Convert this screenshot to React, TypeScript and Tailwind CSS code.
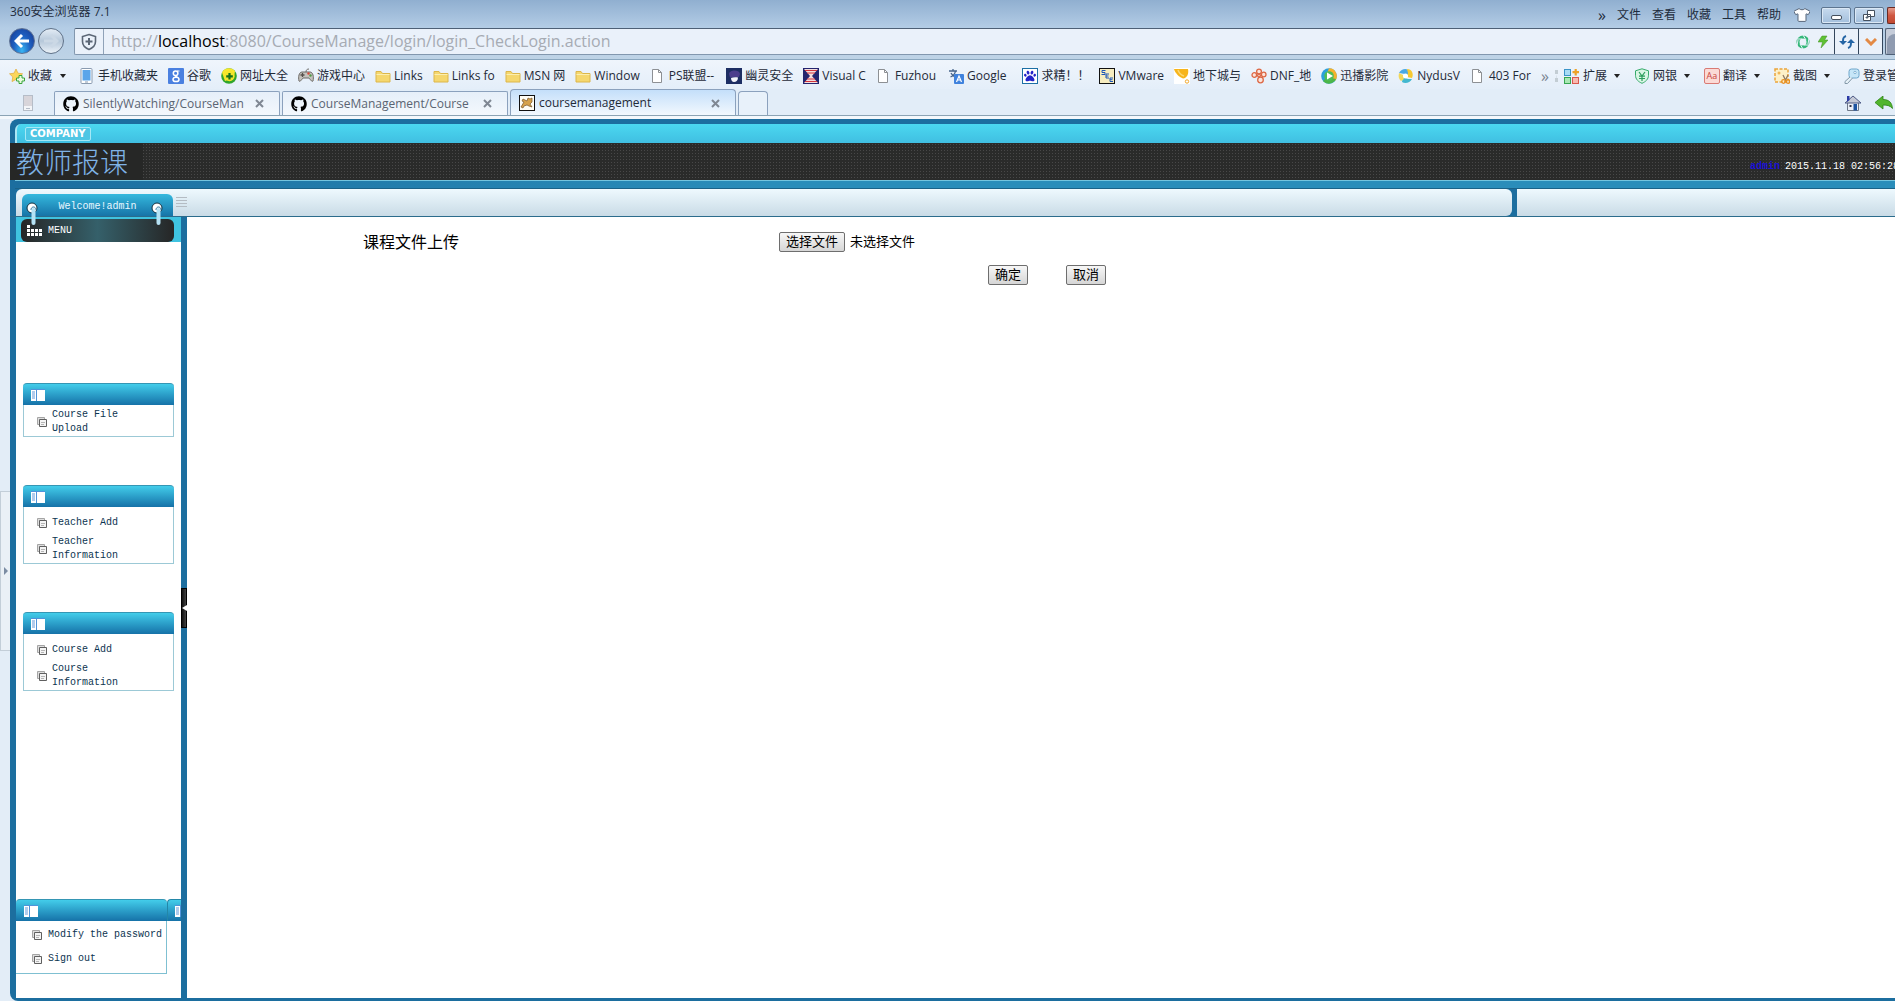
import { useState } from 'react';
import type { ReactNode } from 'react';
import { FaGithub, FaPaw, FaTshirt } from 'react-icons/fa';

interface Bookmark {
  label: string;
  icon: ReactNode;
  className?: string;
}

interface NavGroup {
  id: string;
  items: string[];
}

const Icon = ({ children }: { children: ReactNode }) => (
  <svg viewBox="0 0 16 16" className="h-4 w-4 shrink-0" aria-hidden="true">
    {children}
  </svg>
);

const FolderIcon = () => (
  <Icon>
    <path d="M1 3.5h5l1.5 2H15V14H1z" fill="#f5d76e" stroke="#dcb64a" strokeWidth="1" />
    <path d="M1.5 6.5h13" stroke="#fbeeb0" strokeWidth="1" />
  </Icon>
);

const PageIcon = () => (
  <Icon>
    <path d="M2.5 1.500h6l3 3v10h-9z" fill="#fff" stroke="#8d9094" />
    <path d="M8.5 1.5v3h3" fill="none" stroke="#8d9094" />
  </Icon>
);

const StarIcon = () => (
  <Icon>
    <path d="M7 1l2 4.2 4.6.6-3.4 3.2.8 4.6L7 11.4l-4 2.2.8-4.6L.5 5.8 5 5.2z" fill="#fbd65a" stroke="#e0a93a" strokeWidth=".7" />
    <path d="M10 7.5h3V10h2.5v3H13v2.5h-3V13H7.5v-3H10z" fill="#eafbe0" stroke="#3aa53a" />
  </Icon>
);

const PhoneIcon = () => (
  <Icon>
    <rect x="2" y=".5" width="11" height="15" rx="1" fill="#fff" stroke="#8a9bb0" />
    <rect x="3.5" y="2" width="8" height="10.5" fill="#5aa5ea" />
    <path d="M6 14h3" stroke="#8a9bb0" />
  </Icon>
);

const bookmarks: Bookmark[] = [
  { label: '手机收藏夹', icon: <PhoneIcon /> },
  {
    label: '谷歌',
    icon: (
      <Icon>
        <rect width="16" height="16" rx="1" fill="#4a80e0" />
        <circle cx="7.6" cy="5.2" r="2.3" fill="none" stroke="#fff" strokeWidth="1.5" />
        <ellipse cx="8" cy="11.4" rx="3" ry="2.2" fill="none" stroke="#fff" strokeWidth="1.5" />
        <path d="M8 7.5c-2 1 1 1 1.5 2M9 3h2.5" fill="none" stroke="#fff" strokeWidth="1.2" />
      </Icon>
    ),
  },
  {
    label: '网址大全',
    icon: (
      <Icon>
        <circle cx="8" cy="8" r="7.8" fill="#2fa52c" />
        <path d="M1 4.5a7.8 7.8 0 0 1 13-1.5L13 10 4 13z" fill="#f7e72c" />
        <circle cx="8.5" cy="8.3" r="5" fill="#f3e62a" />
        <path d="M8.5 5v6.6M5.2 8.3h6.6" stroke="#15701c" strokeWidth="2.2" />
      </Icon>
    ),
  },
  {
    label: '游戏中心',
    icon: (
      <Icon>
        <path d="M1 13C0 9 1 4 4 4h8c3 0 4 5 3 9-1 1.500-3-2-4-3H5c-1 1-3 4.500-4 3z" fill="#c4c2bd" stroke="#6d6a66" />
        <path d="M4.500 5v4M2.500 7h4" stroke="#554f4a" strokeWidth="1.300" />
        <circle cx="10.500" cy="5.500" r="1.200" fill="#d6483a" />
        <circle cx="12.500" cy="7.500" r="1.200" fill="#4f9b47" />
        <path d="M8 4c0-2 1-3 3-3" fill="none" stroke="#6d6a66" />
      </Icon>
    ),
  },
  { label: 'Links', icon: <FolderIcon /> },
  { label: 'Links fo', icon: <FolderIcon /> },
  { label: 'MSN 网', icon: <FolderIcon /> },
  { label: 'Window', icon: <FolderIcon /> },
  { label: 'PS联盟--', icon: <PageIcon />, className: 'pr-[2px]' },
  {
    label: '幽灵安全',
    icon: (
      <Icon>
        <rect width="16" height="16" fill="#1d2e63" />
        <path d="M3 6c0-4 10-5 11 0l-1 3-9 .5z" fill="#4b3d8c" />
        <path d="M5 10c2-1 5-1 7-.5 0 3-2 4.500-4 4.500s-3-2-3-4z" fill="#f2f3fa" />
      </Icon>
    ),
  },
  {
    label: 'Visual C',
    icon: (
      <Icon>
        <rect width="16" height="16" fill="#24246e" />
        <path d="M1 1h14L9 8l6 7H1l6-7z" fill="#f4dede" />
        <path d="M2 2.500h12M4 5h8M4 11h8M2 13.500h12" stroke="#d2343c" strokeWidth="1.200" />
      </Icon>
    ),
  },
  { label: 'Fuzhou', icon: <PageIcon />, className: 'pr-[2px]' },
  {
    label: 'Google',
    className: 'pr-[6px]',
    icon: (
      <Icon>
        <path d="M1 3h8M5 1v2M2.500 9C5 8 7 6 7.500 3M3 5c1 2 2 3 4 4" fill="none" stroke="#46648a" strokeWidth="1.300" />
        <rect x="6" y="6" width="10" height="10" rx="1" fill="#3f82dd" />
        <path d="M8.500 14L11 8l2.500 6M9.500 12h3" fill="none" stroke="#fff" strokeWidth="1.200" />
      </Icon>
    ),
  },
  {
    label: '求精！！',
    icon: (
      <span className="flex h-4 w-4 shrink-0 items-center justify-center border border-[#1c6fa5] bg-white">
        <FaPaw className="h-3 w-3 text-[#2323c8]" />
      </span>
    ),
  },
  {
    label: 'VMware',
    icon: (
      <Icon>
        <rect x=".5" y=".5" width="15" height="15" fill="#f7edc0" stroke="#111" />
        <path d="M6.500 2.500H3v2h3v2H2.500M10 6H7v4h3M7 8h2.500M14 10h-3v3.500h3M11 11.700h2.500" fill="none" stroke="#1c55b8" strokeWidth="1" />
      </Icon>
    ),
  },
  {
    label: '地下城与',
    icon: (
      <Icon>
        <rect width="16" height="16" fill="#fff" />
        <path d="M0 1h14c1 5-1 9-5 9.500C5 9 1 5 0 1z" fill="#f7b51c" />
        <path d="M4 2c1 3 3 5 6 6" fill="none" stroke="#fbd873" strokeWidth="1.500" />
        <circle cx="13" cy="13.500" r="1.700" fill="none" stroke="#f0a72a" />
      </Icon>
    ),
  },
  {
    label: 'DNF_地',
    icon: (
      <Icon>
        <g fill="#fbe5dc" stroke="#dd6744" strokeWidth="1.300">
          <circle cx="8" cy="3.500" r="2.400" />
          <circle cx="3.300" cy="7" r="2.300" />
          <circle cx="12.700" cy="6.500" r="2.300" />
          <circle cx="9.500" cy="12" r="2.800" />
          <circle cx="8" cy="7.500" r="1.400" />
        </g>
      </Icon>
    ),
  },
  {
    label: '迅播影院',
    icon: (
      <Icon>
        <circle cx="8" cy="8" r="7.800" fill="#2ba0dc" />
        <path d="M8 .2A7.800 7.800 0 0 1 14 13L5 8z" fill="#f5b22b" />
        <path d="M2 13a7.800 7.800 0 0 0 13-2L6 9z" fill="#4cb648" />
        <circle cx="8" cy="8" r="4.800" fill="#4ebd5a" />
        <path d="M6 4.500L12 8l-6 3.500z" fill="#fff" />
      </Icon>
    ),
  },
  {
    label: 'NydusV',
    icon: (
      <Icon>
        <path d="M1 5c2-4 7-5 9-3l2 6-5-2z" fill="#49a9e4" />
        <path d="M9 1c5 0 7 5 5 9l-5-1 1-4z" fill="#f6c931" />
        <path d="M14 11c-2 4-7 5-10 3l1-5 5 2z" fill="#43b8cf" />
        <path d="M1 5c-1 4 0 6 2 8l3-2-1-4z" fill="#f2d75a" />
        <circle cx="7.500" cy="8" r="2.500" fill="#fff" />
      </Icon>
    ),
  },
  { label: '403 For', icon: <PageIcon /> },
];

const extensions: Bookmark[] = [
  {
    label: '扩展',
    icon: (
      <Icon>
        <rect x=".5" y="1.500" width="6" height="6" fill="#a8dcf5" stroke="#3a94c8" />
        <rect x=".5" y="9.500" width="6" height="6" fill="#a9e8b4" stroke="#36a651" />
        <rect x="8.500" y="9.500" width="6" height="6" fill="#f9b9b0" stroke="#d85a4e" />
        <path d="M11.700 1v6.500M8.500 4.200H15" stroke="#eda227" strokeWidth="2.200" />
      </Icon>
    ),
  },
  {
    label: '网银',
    icon: (
      <Icon>
        <path d="M8 .8l6.500 2v4.500c0 4-3 6.500-6.500 8-3.500-1.500-6.500-4-6.500-8V2.800z" fill="#d9f5e4" stroke="#37ab6b" />
        <path d="M5 4l3 4 3-4M5 8.200h6M5 10.500h6M8 8v5" fill="none" stroke="#2b9d5c" strokeWidth="1.200" />
      </Icon>
    ),
  },
  {
    label: '翻译',
    icon: (
      <span className="flex h-4 w-4 shrink-0 items-center justify-center rounded-xs border border-[#d97a74] bg-[#fbdad6] text-[9px] text-[#c9453d]">
        Aa
      </span>
    ),
  },
  {
    label: '截图',
    icon: (
      <Icon>
        <rect x="1" y="1" width="13" height="13" fill="#fdf0c8" stroke="#eaa43a" strokeWidth="1.500" strokeDasharray="3 1.500" />
        <circle cx="5" cy="5" r="1.500" fill="#efb75a" />
        <path d="M9 7l2.500 5L14 7" fill="none" stroke="#8f7a66" strokeWidth="1.300" />
        <circle cx="9.500" cy="13.500" r="1.800" fill="none" stroke="#e98f1f" strokeWidth="1.300" />
        <circle cx="14" cy="13.500" r="1.800" fill="none" stroke="#e98f1f" strokeWidth="1.300" />
      </Icon>
    ),
  },
];

const groups: NavGroup[] = [
  { id: 'upload', items: ['Course File Upload'] },
  { id: 'teacher', items: ['Teacher Add', 'Teacher Information'] },
  { id: 'course', items: ['Course Add', 'Course Information'] },
];

const Arrow = () => (
  <span className="h-0 w-0 border-x-[3px] border-t-4 border-x-transparent border-t-[#222]" />
);

const TitleBar = () => (
  <div className="flex h-7 shrink-0 items-start justify-between bg-linear-to-b from-[#90afd0] to-[#b4cde6] pl-[10px] text-xs text-[#1e2c3c]">
    <span className="leading-6">360安全浏览器 7.1</span>
    <div className="flex shrink-0 items-center gap-[11px] pt-[3px]">
      <button className="text-base leading-6">»</button>
      {['文件', '查看', '收藏', '工具', '帮助'].map((item) => (
        <button key={item} className="leading-6">
          {item}
        </button>
      ))}
      <FaTshirt className="ml-[2px] h-4 w-4 fill-white stroke-[#566579] stroke-[40px]" />
      <div className="flex items-center gap-[3px]">
        <button
          aria-label="Minimize"
          className="flex h-[17px] w-[30px] items-center justify-center rounded-xs border border-[#5d7590] bg-linear-to-b from-[#c7daee] to-[#a3bfdc] shadow-[inset_0_0_0_1px_#dbe8f5]"
        >
          <span className="mt-1 h-[5px] w-[11px] rounded-xs border border-[#45505e] bg-white" />
        </button>
        <button
          aria-label="Restore"
          className="flex h-[17px] w-[30px] items-center justify-center rounded-xs border border-[#5d7590] bg-linear-to-b from-[#c7daee] to-[#a3bfdc] shadow-[inset_0_0_0_1px_#dbe8f5]"
        >
          <svg viewBox="0 0 12 11" className="h-[11px] w-3">
            <path d="M4.500.5h7v6h-7z M.5 4.500h7v6h-7z" fill="#fff" stroke="#45505e" />
            <path d="M3 7h2v1H3z" fill="#8aa6c4" stroke="#45505e" strokeWidth=".8" />
          </svg>
        </button>
        <button
          aria-label="Close"
          className="h-[17px] w-2 rounded-l-xs border border-r-0 border-[#6b2a22] bg-linear-to-b from-[#e39b8c] via-[#cf5741] to-[#c14a32]"
        />
      </div>
    </div>
  </div>
);

const AddressBar = () => (
  <div className="flex h-8 shrink-0 items-start border-b border-[#8aa7bf] bg-linear-to-b from-[#b4cde6] to-[#bed3e6] pl-[9px]">
    <div className="flex items-center gap-[3px] rounded-full">
      <button
        aria-label="Back"
        className="flex h-[26px] w-[26px] items-center justify-center rounded-full border border-[#5b6f93] bg-radial-[at_50%_90%] from-[#39b4f2] via-[#1d5fc0] to-[#17358c]"
      >
        <svg viewBox="0 0 16 16" className="h-4 w-4">
          <path d="M8 2L2 8l6 6M2.500 8H15" fill="none" stroke="#fff" strokeWidth="3" />
        </svg>
      </button>
      <button
        aria-label="Forward"
        className="flex h-[26px] w-[26px] items-center justify-center rounded-full border border-[#5f7188] bg-linear-to-b from-[#e3ecf5] via-[#b6c8da] to-[#eaf1f8]"
      >
        <svg viewBox="0 0 16 16" className="h-4 w-4">
          <path d="M8 2l6 6-6 6M13.500 8H1" fill="none" stroke="#cbd8e5" strokeWidth="3" />
        </svg>
      </button>
    </div>
    <div className="ml-[10px] flex h-[27px] min-w-0 grow items-stretch rounded-l-xs border border-r-0 border-[#8297ae] border-t-[#4e6076] bg-[#eaf1fa]">
      <span className="flex w-[29px] shrink-0 items-center justify-center border-r border-[#8fa2b8]">
        <svg viewBox="0 0 18 18" className="h-[18px] w-[18px]">
          <path d="M9 1.500l6.500 2v5c0 4-3 6.500-6.500 8-3.500-1.500-6.500-4-6.500-8v-5z" fill="none" stroke="#5b6776" strokeWidth="1.600" />
          <path d="M9 5v7M5.500 8.500h7" stroke="#5b6776" strokeWidth="2" />
        </svg>
      </span>
      <div className="grow pl-[7px] font-['Open_Sans','Noto_Sans_CJK_SC',sans-serif] text-base leading-[25px] text-[#a6abb3]">
        http://<span className="text-black">localhost</span>:8080/CourseManage/login/login_CheckLogin.action
      </div>
      <div className="flex items-center gap-2 pr-[6px]">
        <svg viewBox="0 0 14 14" className="h-[14px] w-[14px]">
          <circle cx="7" cy="7" r="5" fill="none" stroke="#35b879" strokeWidth="3" />
          <path d="M7 0l3 5M13 3l-1 6M13 10H8M7 14l-3-5M1 11l1-6M1 4h5" stroke="#eaf1fa" />
        </svg>
        <svg viewBox="0 0 10 14" className="h-[14px] w-[10px]">
          <path d="M4 1h5L6.500 5H10L3 13l1.500-6H0z" fill="#5fc234" stroke="#438f25" strokeWidth=".5" />
        </svg>
      </div>
      <button aria-label="Reload" className="flex w-6 items-center justify-center border-l border-[#33465c]">
        <svg viewBox="0 0 16 14" className="h-[14px] w-4">
          <path d="M7 1C4 2 4 4 4 7M9 13c3-1 3-3 3-6" fill="none" stroke="#2465a5" strokeWidth="2" />
          <path d="M0 6h8l-4 4zM8 8h8l-4-4z" fill="#2465a5" />
        </svg>
      </button>
      <button aria-label="History" className="flex w-[25px] items-center justify-center border-x border-[#33465c]">
        <svg viewBox="0 0 12 8" className="h-2 w-3">
          <path d="M1 1l5 5 5-5" fill="none" stroke="#e38a45" strokeWidth="3" />
        </svg>
      </button>
    </div>
    <div className="ml-[2px] flex h-[27px] w-[10px] shrink-0 items-end overflow-hidden rounded-l-xs border border-r-0 border-[#4e6076] bg-[#c5ccd9]">
      <span className="ml-px h-5 w-4 shrink-0 rounded-t-full bg-[#8f9bb0]" />
    </div>
  </div>
);

const BookmarkBar = () => (
  <div className="flex h-[29px] shrink-0 items-center justify-between overflow-hidden bg-linear-to-b from-[#eff5fc] to-[#e4eef9] pt-[2px] pl-[9px] text-xs whitespace-nowrap text-[#1f2a38]">
    <div className="flex shrink-0 items-center gap-[10px]">
      <button className="mr-[3px] flex items-center gap-[3px]">
        <StarIcon />
        <span className="mr-[5px]">收藏</span>
        <Arrow />
      </button>
      {bookmarks.map((bookmark) => (
        <a key={bookmark.label} href="#" className={`flex items-center gap-[3px] ${bookmark.className ?? ''}`}>
          {bookmark.icon}
          {bookmark.label}
        </a>
      ))}
    </div>
    <div className="flex shrink-0 items-center">
      <button className="mr-[6px] text-base leading-4 text-[#7a8490]">»</button>
      <span className="mr-[6px] h-3 border-l-[3px] border-dotted border-[#c3cdd4]" />
      {extensions.map((extension) => (
        <button key={extension.label} className="mr-[14px] flex items-center gap-[3px]">
          {extension.icon}
          <span className="mr-1">{extension.label}</span>
          <Arrow />
        </button>
      ))}
      <button className="-mr-1 flex items-center gap-[3px]">
        <Icon>
          <rect x="5" y="1" width="10" height="9" rx="2.500" fill="#c6e6f8" stroke="#6ea6cb" />
          <circle cx="11" cy="4.500" r="1.200" fill="#fff" stroke="#6ea6cb" strokeWidth=".8" />
          <path d="M6 9l-5 4.500v2h2.500l5-5.500" fill="#e6f1f8" stroke="#8398a8" />
        </Icon>
        登录管
      </button>
    </div>
  </div>
);

const TomcatIcon = () => (
  <Icon>
    <rect x=".5" y=".5" width="15" height="15" fill="#fffdf5" stroke="#111" />
    <path d="M2 12l3-5-2-1 1-2 4 2 1-3 2 1 2-1v4l-2 2 2 3-3-1-2-1-3 1-1 2z" fill="#d6a24c" stroke="#77552a" strokeWidth=".7" />
  </Icon>
);

const CloseMark = () => (
  <svg viewBox="0 0 9 9" className="h-[9px] w-[9px]">
    <path d="M1 1l7 7M8 1L1 8" stroke="#7f8793" strokeWidth="2" />
  </svg>
);

const TabBar = () => (
  <div className="flex h-[27px] shrink-0 items-end justify-between border-b border-[#8ba3b4] bg-[#e2edf8] pr-[2px] text-xs">
    <div className="flex items-end gap-[2px]">
      <span className="mr-[19px] mb-1 ml-[23px] flex h-4 w-[10px] flex-col items-center justify-between border border-[#b5bdc8] bg-[#f3f5f8] pb-px">
        <span className="h-[10px] w-full bg-[#d8d5da]" />
        <span className="h-px w-1 bg-[#b5bdc8]" />
      </span>
      {['SilentlyWatching/CourseMan', 'CourseManagement/Course'].map((tab) => (
        <div
          key={tab}
          className="flex h-6 w-[226px] items-center rounded-t-xs border border-b-0 border-[#8ba1bd] bg-linear-to-b from-[#e6eff9] to-[#f3f8fd] pl-2 text-[#5a6472]"
        >
          <FaGithub className="h-4 w-4 shrink-0 text-black" />
          <span className="ml-1 w-[172px] whitespace-nowrap">{tab}</span>
          <button aria-label="Close tab">
            <CloseMark />
          </button>
        </div>
      ))}
      <div className="flex h-[26px] w-[226px] items-center rounded-t-sm border border-b-0 border-[#8ba1bd] bg-linear-to-b from-[#c4dffa] to-[#f2f8fe] pt-px pl-2 text-[#1f2a38]">
        <TomcatIcon />
        <span className="ml-1 w-[172px]">coursemanagement</span>
        <button aria-label="Close tab">
          <CloseMark />
        </button>
      </div>
      <button aria-label="New tab" className="h-6 w-[30px] rounded-t-sm border border-b-0 border-[#8ba1bd] bg-[#e8f1fa]" />
    </div>
    <div className="mb-1 flex items-center gap-[14px]">
      <svg viewBox="0 0 16 16" className="h-4 w-4">
        <path d="M2.500 7h11v8.500h-11z" fill="#e9eef7" stroke="#6d7888" />
        <path d="M0 8l8-7 8 7z" fill="#c4c9d6" stroke="#4d5a85" />
        <path d="M2 1h2.500v4L2 7z" fill="#2b3aa5" />
        <rect x="8.500" y="9" width="3.500" height="6.500" fill="#1c53a0" />
        <rect x="4.500" y="10" width="2" height="2" fill="#334" />
      </svg>
      <svg viewBox="0 0 18 14" className="h-[14px] w-[18px]">
        <path d="M0 6.500L8 0v3.500c6 0 9 3 9.500 9C15 9.500 12 9 8 9v4z" fill="#51b52c" stroke="#2d8317" strokeWidth=".8" />
      </svg>
    </div>
  </div>
);

const PanelIcon = () => (
  <svg viewBox="0 0 14 12" className="h-3 w-[14px] shrink-0">
    <rect width="14" height="12" fill="#fff" />
    <path d="M0 .5h14M5.500 0v12" stroke="#4f93da" />
    <path d="M1 3h3M1 5h3M1 7h3M1 9h3" stroke="#3a7fd0" strokeWidth=".8" />
  </svg>
);

const ItemIcon = () => (
  <svg viewBox="0 0 10 10" className="h-[10px] w-[10px] shrink-0">
    <path d="M.5.5h7v7h-7z" fill="#dedede" stroke="#a5a5a5" />
    <path d="M2.500 2.500h7v7h-7z" fill="#f4f4f4" stroke="#5f5f5f" />
    <path d="M4 5.500h4M4 7.500h3" stroke="#b5b5b5" />
  </svg>
);

const NavPanel = ({ items }: { items: string[] }) => (
  <section>
    <div className="flex h-[22px] items-center rounded-t-sm border-t border-[#3596b4] bg-linear-to-b from-[#43cdea] to-[#1672a8] pl-2">
      <PanelIcon />
    </div>
    <ul className="border border-t-0 border-[#9cc9d6] pt-[3px] pl-[13px]">
      {items.map((item) => (
        <li key={item} className="flex min-h-[25px] items-center gap-[5px]">
          <ItemIcon />
          <a href="#" className="w-[84px]">
            {item}
          </a>
        </li>
      ))}
    </ul>
  </section>
);

const Ring = () => (
  <svg viewBox="0 0 14 24" className="h-6 w-[14px]">
    <circle cx="6" cy="6" r="5" fill="#fff" stroke="#12303f" strokeWidth="1" />
    <path d="M5 8c0-4 5-4 5 0" fill="none" stroke="#1d6d98" strokeWidth="1" />
    <path d="M7.500 8v13" stroke="#b5e2f4" strokeWidth="4" strokeLinecap="round" />
  </svg>
);

const Sidebar = () => (
  <aside className="flex w-[165px] shrink-0 flex-col overflow-hidden bg-white font-['Liberation_Mono','Noto_Sans_CJK_SC',monospace] text-[10px] leading-[14px] text-[#0c3450]">
    <div className="h-[25px] shrink-0 bg-[#3fc3e0] pt-[2px] pr-[7px] pl-[5px]">
      <h2 className="flex h-[23px] items-center rounded-md bg-[linear-gradient(to_right,#262626,#35606a_50%,#262626)] pl-[6px] text-white">
        <svg viewBox="0 0 16 11" className="mr-[5px] h-[11px] w-4">
          <path d="M0 0h3v3H0zM0 4h3v3H0zM0 8h3v3H0zM4 4h3v3H4zM4 8h3v3H4zM8 4h3v3H8zM8 8h3v3H8zM12 4h3v3h-3zM12 8h3v3h-3z" fill="#fff" />
        </svg>
        MENU
      </h2>
    </div>
    <nav className="flex grow flex-col pb-6">
      <div className="mt-[141px] flex flex-col gap-12 px-[7px]">
        {groups.map((group) => (
          <NavPanel key={group.id} items={group.items} />
        ))}
      </div>
      <div className="mt-auto flex items-start">
        <section className="w-[151px] shrink-0">
          <div className="flex h-[22px] items-center rounded-t-sm border-t border-[#3596b4] bg-linear-to-b from-[#43cdea] to-[#1672a8] pl-2">
            <PanelIcon />
          </div>
          <ul className="border-r border-b border-[#7fc0d2] pt-[2px] pb-[2px] pl-4">
            {['Modify the password', 'Sign out'].map((item) => (
              <li key={item} className="flex h-6 items-center gap-[6px] whitespace-nowrap">
                <ItemIcon />
                <a href="#">{item}</a>
              </li>
            ))}
          </ul>
        </section>
        <div className="flex h-[22px] w-[14px] items-center overflow-hidden rounded-tl-sm border-t border-l border-[#2387a8] bg-linear-to-b from-[#43cdea] to-[#1672a8] pl-[7px]">
          <PanelIcon />
        </div>
      </div>
    </nav>
  </aside>
);

const UploadForm = () => {
  const [fileName, setFileName] = useState('未选择文件');

  return (
    <form className="grow bg-white pt-[11px] text-[13px] text-black" onSubmit={(e) => e.preventDefault()}>
      <div className="flex h-7 items-center">
        <label htmlFor="courseFile" className="w-[592px] shrink-0 pl-44 text-base">
          课程文件上传
        </label>
        <input
          id="courseFile"
          type="file"
          className="sr-only"
          onChange={(e) => setFileName(e.target.files?.[0]?.name ?? '未选择文件')}
        />
        <label
          htmlFor="courseFile"
          className="mr-[5px] flex h-5 items-center rounded-xs border border-[#6e6e6e] bg-linear-to-b from-[#f7f7f7] to-[#d6d6d6] px-[6px]"
        >
          选择文件
        </label>
        <span>{fileName}</span>
      </div>
      <div className="mt-[3px] flex h-8 items-center justify-center gap-[38px] pl-3">
        <button className="flex h-5 items-center rounded-xs border border-[#6e6e6e] bg-linear-to-b from-[#f7f7f7] to-[#d6d6d6] px-[6px]">
          确定
        </button>
        <button
          type="button"
          className="flex h-5 items-center rounded-xs border border-[#6e6e6e] bg-linear-to-b from-[#f7f7f7] to-[#d6d6d6] px-[6px]"
        >
          取消
        </button>
      </div>
    </form>
  );
};

const CoursePage = () => (
  <div className="flex min-w-0 grow flex-col overflow-hidden rounded-l-lg bg-[#1c6e9f] pt-[5px] pb-[3px]">
    <div className="ml-[5px] flex h-[19px] shrink-0 items-center rounded-tl-md border-l-2 border-[#a9e6f5] bg-linear-to-b from-[#4bd8f0] to-[#40bfe2] pl-2">
      <span className="flex h-[14px] items-center rounded-xs border border-[#a4e8f6] bg-[#4fc6e4] px-1 font-['DejaVu_Sans',sans-serif] text-[10px] font-bold text-white">
        COMPANY
      </span>
    </div>
    <header className="flex h-[37px] shrink-0 items-center justify-between overflow-hidden bg-[#2a2b2a] bg-[radial-gradient(#484848_1px,transparent_1px)] bg-size-[3px_3px]">
      <h1 className="flex h-full w-[133px] items-center bg-[#262726] pl-[6px] text-[28px] font-light leading-none text-[#7fb3e6]">
        教师报课
      </h1>
      <div className="-mr-1 flex gap-[5px] pt-[10px] font-['Liberation_Mono',monospace] text-[10px] leading-4 whitespace-nowrap">
        <a href="#" className="font-bold text-[#1a10d8]">
          admin
        </a>
        <time className="text-white">2015.11.18 02:56:28</time>
      </div>
    </header>
    <div className="ml-[5px] h-[9px] shrink-0 border-t border-[#74c4de] bg-linear-to-r from-[#1c6e9f] to-[#2a8dba] to-40% shadow-[inset_0_-1px_0_#1b6288]" />
    <div className="flex h-7 shrink-0 border-b border-[#2b6c8c] pl-[6px]">
      <div className="flex w-[1496px] shrink-0 rounded-md rounded-bl-none bg-linear-to-b from-[#eef9fe] to-[#c9dbe6] pl-[6px]">
        <div className="relative mt-[5px] flex w-[151px] items-center justify-center rounded-t-md bg-linear-to-b from-[#35b9de] to-[#1774a8] pt-[3px] font-['Liberation_Mono',monospace] text-[10px] text-[#e9f8ff]">
          Welcome!admin
          <span className="absolute top-2 left-1">
            <Ring />
          </span>
          <span className="absolute top-2 right-2">
            <Ring />
          </span>
        </div>
        <span className="mt-2 ml-[3px] h-3 w-[11px] bg-[repeating-linear-gradient(to_bottom,#b4bcc3_0_1px,transparent_1px_3px)]" />
      </div>
      <div className="ml-[5px] grow bg-linear-to-b from-[#eef9fe] to-[#c9dbe6]" />
    </div>
    <div className="flex min-h-0 grow pl-[6px]">
      <Sidebar />
      <div className="flex w-[6px] shrink-0 items-center">
        <button
          aria-label="Collapse menu"
          className="flex h-10 w-[6px] items-center border border-black bg-linear-to-r from-[#111] to-[#444]"
        >
          <span className="h-0 w-0 border-y-[3px] border-r-[5px] border-y-transparent border-r-white" />
        </button>
      </div>
      <UploadForm />
    </div>
  </div>
);

const App = () => (
  <div className="flex h-screen flex-col overflow-hidden bg-[#e3edf7] font-['Open_Sans','Noto_Sans_CJK_SC',sans-serif]">
    <TitleBar />
    <AddressBar />
    <BookmarkBar />
    <TabBar />
    <div className="h-[3px] shrink-0 bg-[#f4f8fc]" />
    <div className="flex min-h-0 grow">
      <div className="flex w-[10px] shrink-0 items-center pt-[22px]">
        <button
          aria-label="Open side panel"
          className="flex h-40 w-[10px] items-center justify-end border border-r-0 border-[#c3ced8] bg-[#eaf0f6] pr-[2px]"
        >
          <span className="h-0 w-0 border-y-4 border-l-4 border-y-transparent border-l-[#7b8ca3]" />
        </button>
      </div>
      <CoursePage />
    </div>
  </div>
);

export default App;
